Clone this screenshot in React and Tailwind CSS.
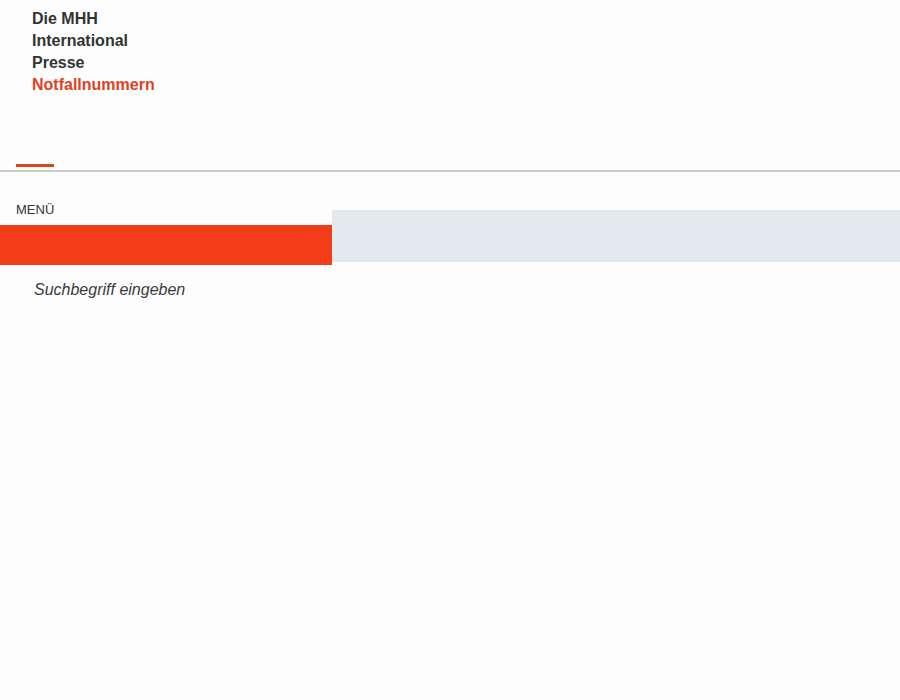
export default function App() {
  return (
    <div className="min-h-[700px] w-full bg-[#fdfdfd] text-[#333]" style={{ fontFamily: '"Liberation Sans", Arial, sans-serif' }}>
      <ul className="pl-8 pt-[8px] text-[16px] font-bold leading-[22px]">
        <li>Die MHH</li>
        <li>International</li>
        <li>Presse</li>
        <li className="text-[#e2401d]">Notfallnummern</li>
      </ul>
      <div className="mt-[68px]">
        <div className="ml-4 h-[3px] w-[38px] bg-[#d9461f]" />
        <div className="mt-[3px] h-[2px] w-full bg-[#cccccc]" />
      </div>
      <div className="flex">
        <div className="w-[332px] shrink-0">
          <div className="mt-[30px] h-4 pl-4 text-[13px] uppercase leading-4 text-[#333]">Menü</div>
          <div className="mt-[7px] h-10 bg-[#f33c18]" />
          <div className="pl-[34px] pt-[13px] text-[16px] italic leading-6 text-[#3a3a3a]">Suchbegriff eingeben</div>
        </div>
        <div className="mt-[38px] h-[52px] flex-1 bg-[#e4e9ee]" />
      </div>
    </div>
  );
}
